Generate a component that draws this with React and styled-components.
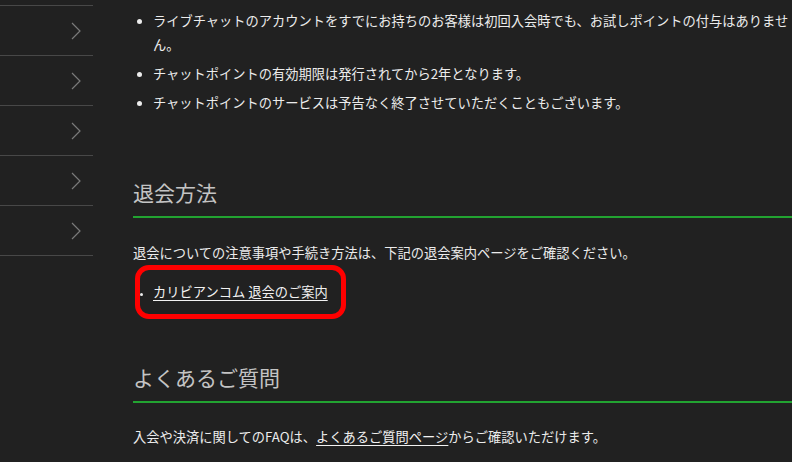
import React from "react";
import styled, { createGlobalStyle } from "styled-components";

const menuRows = 5;

const App = () => {
  return (
    <>
      <GlobalStyle />
      <Page>
        <SideMenu>
          {Array.from({ length: menuRows }).map((_, index) => (
            <MenuRow key={index}>
              <Chevron viewBox="0 0 10 18" aria-hidden="true">
                <path d="M1 1 L9 9 L1 17" />
              </Chevron>
            </MenuRow>
          ))}
        </SideMenu>

        <Main>
          <NoteList>
            <NoteItem>
              ライブチャットのアカウントをすでにお持ちのお客様は初回入会時でも、お試しポイントの付与はありません。
            </NoteItem>
            <NoteItem>チャットポイントの有効期限は発行されてから2年となります。</NoteItem>
            <NoteItem>チャットポイントのサービスは予告なく終了させていただくこともございます。</NoteItem>
          </NoteList>

          <Heading $top={62}>退会方法</Heading>
          <Text $top={23}>
            退会についての注意事項や手続き方法は、下記の退会案内ページをご確認ください。
          </Text>
          <LinkList>
            <LinkItem>
              <TextLink href="#">カリビアンコム 退会のご案内</TextLink>
              <Highlight />
            </LinkItem>
          </LinkList>

          <Heading $top={58}>よくあるご質問</Heading>
          <Text $top={22}>
            入会や決済に関してのFAQは、<TextLink href="#">よくあるご質問ページ</TextLink>
            からご確認いただけます。
          </Text>
        </Main>
      </Page>
    </>
  );
};

export default App;

const GlobalStyle = createGlobalStyle`
  html, body {
    margin: 0;
    padding: 0;
    background: #212121;
    overflow: hidden;
  }

  body {
    font-family: "Noto Sans CJK JP", "Noto Sans", sans-serif;
    color: #ececec;
  }
`;

const Page = styled.div`
  display: flex;
  width: 792px;
  height: 462px;
  background: #212121;
`;

const SideMenu = styled.ul`
  list-style: none;
  margin: 0;
  padding: 5px 0 0;
  width: 93px;
  flex-shrink: 0;
`;

const MenuRow = styled.li`
  height: 49px;
  display: flex;
  align-items: center;
  justify-content: flex-end;
  padding-right: 12px;
  border-top: 1px solid #484848;

  &:last-child {
    border-bottom: 1px solid #484848;
  }
`;

const Chevron = styled.svg`
  width: 10px;
  height: 18px;
  fill: none;
  stroke: #7a7a7a;
  stroke-width: 1.2;
`;

const Main = styled.div`
  flex: 1;
  margin-left: 40px;
  padding-top: 9px;
`;

const NoteList = styled.ul`
  margin: 0;
  padding: 0 2px 0 20px;
  font-size: 13.25px;
  line-height: 24px;
`;

const NoteItem = styled.li`
  margin-top: 5px;

  &:first-child {
    margin-top: 0;
  }

  &::marker {
    font-size: 12px;
  }
`;

const Heading = styled.h2`
  margin: ${(p) => p.$top}px 0 0;
  padding-bottom: 9px;
  border-bottom: 2px solid #22a331;
  font-size: 21px;
  font-weight: 400;
  line-height: 30px;
  color: #c4c4c4;
`;

const Text = styled.p`
  margin: ${(p) => p.$top}px 0 0;
  font-size: 13.25px;
  line-height: 24px;
`;

const LinkList = styled.ul`
  margin: 15px 0 0;
  padding: 0 0 0 20px;
  font-size: 13.25px;
  line-height: 24px;
`;

const LinkItem = styled.li`
  position: relative;

  &::marker {
    font-size: 9px;
  }
`;

const TextLink = styled.a`
  color: #f2f2f2;
  text-decoration: underline;
  text-underline-offset: 3px;
`;

const Highlight = styled.span`
  position: absolute;
  left: -18px;
  top: -15px;
  width: 201px;
  height: 44px;
  border: 5px solid #ff0000;
  border-radius: 14px;
  pointer-events: none;
`;
